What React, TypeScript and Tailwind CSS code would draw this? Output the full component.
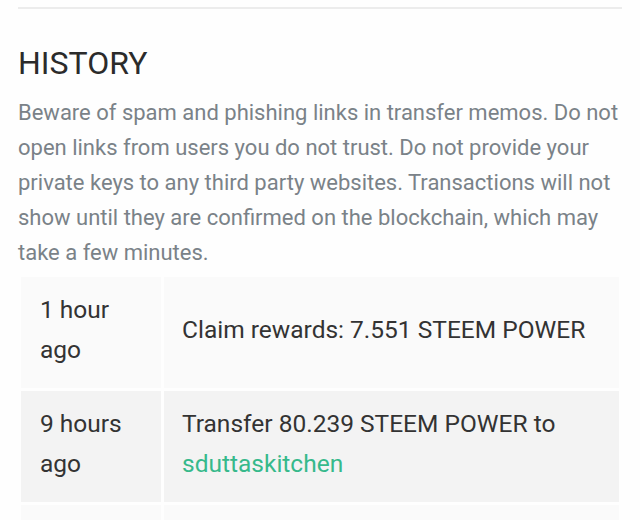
import React from 'react';

type Row = { when: string[]; text: React.ReactNode };

const rows: Row[] = [
  { when: ['1 hour', 'ago'], text: 'Claim rewards: 7.551 STEEM POWER' },
  {
    when: ['9 hours', 'ago'],
    text: (
      <>
        Transfer 80.239 STEEM POWER to{' '}
        <a href="#" className="text-[#36b98b]">sduttaskitchen</a>
      </>
    ),
  },
  { when: ['1 day', 'ago'], text: 'Claim rewards: 3.120 STEEM POWER' },
];

const App: React.FC = () => {
  return (
    <div className="min-h-screen bg-[#fefefe] px-[18px] pt-[7px] font-['Roboto',sans-serif]">
      <div className="h-[2px] bg-[#ececec]" />

      {/* Titre et avertissement */}
      <h2 className="mt-[35px] text-[32px] leading-[38px] text-[#2b2b2b]">HISTORY</h2>
      <p className="mt-[13px] text-[22px] leading-[35px] text-[#7a8288]">
        Beware of spam and phishing links in transfer memos. Do not open links from users you do not
        trust. Do not provide your private keys to any third party websites. Transactions will not
        show until they are confirmed on the blockchain, which may take a few minutes.
      </p>

      <table className="mt-[4px] w-full border-separate border-spacing-[3px] text-[24.5px] leading-[40px] text-[#333]">
        <tbody>
          {rows.map((row, i) => (
            <tr key={i} className={i % 2 === 1 ? 'bg-[#f3f3f3]' : 'bg-[#fafafa]'}>
              <td className="w-[140px] px-[19px] pt-[13px] pb-[18px] align-top">
                {row.when.map((w) => (
                  <div key={w}>{w}</div>
                ))}
              </td>
              <td className="px-[18px] pt-[13px] pb-[18px] align-middle">{row.text}</td>
            </tr>
          ))}
        </tbody>
      </table>
    </div>
  );
};

export default App;
